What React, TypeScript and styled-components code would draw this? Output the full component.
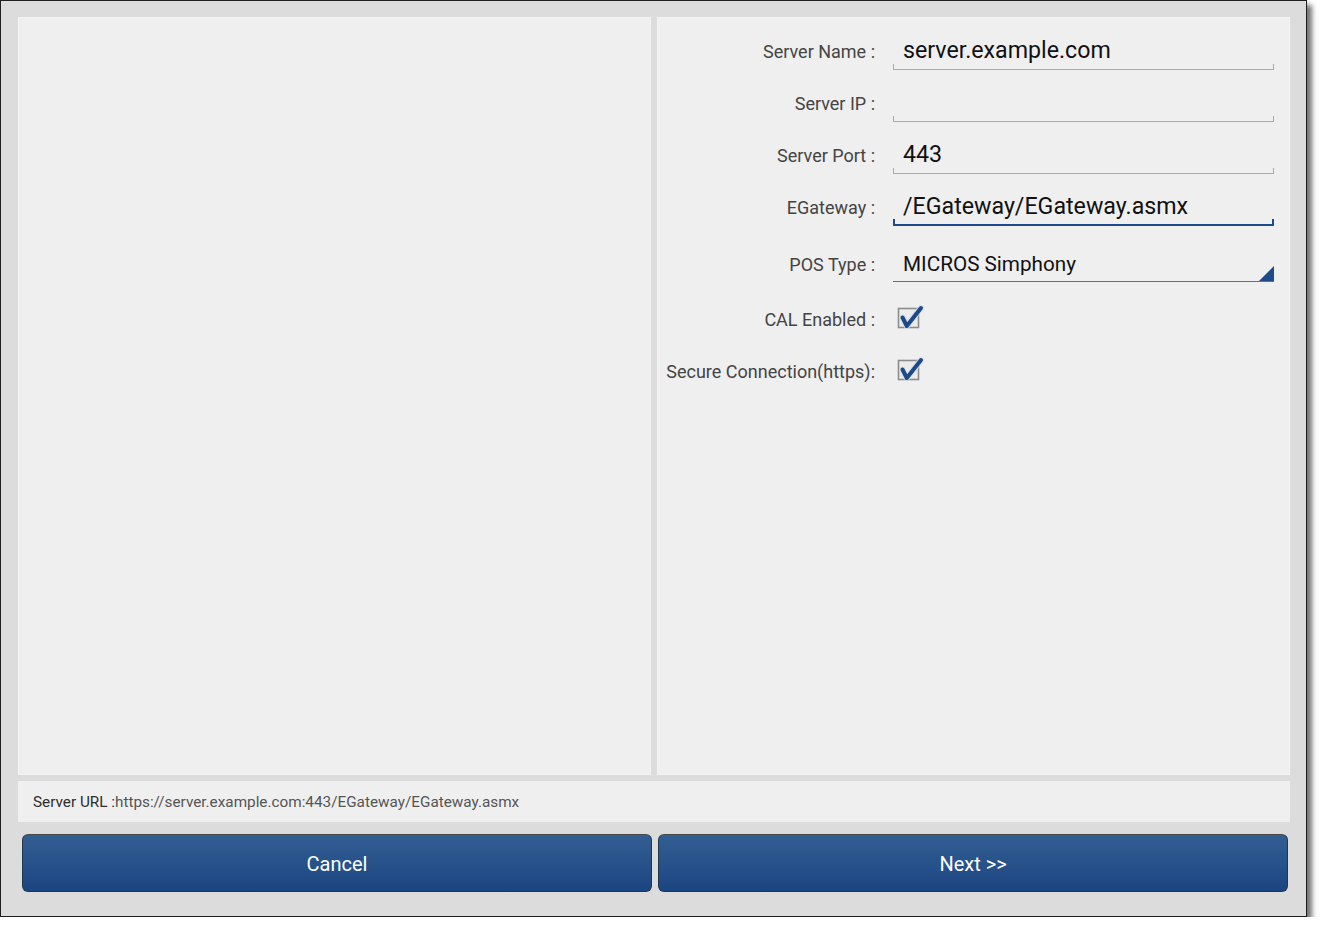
import styled, { createGlobalStyle } from "styled-components"

const Global = createGlobalStyle`
    html, body {
        margin: 0;
        padding: 0;
        background: #ffffff;
        font-family: Roboto, "Liberation Sans", sans-serif;
    }
    * { box-sizing: border-box; }
`

const Frame = styled.div`
    width: 1307px;
    height: 917px;
    background: #dcdcdc;
    border: 1px solid #1e1e1e;
    box-shadow: 5px 5px 5px rgba(0, 0, 0, 0.55);
    padding: 16px 16px 0 17px;
    display: flex;
    flex-direction: column;
`

const Panels = styled.div`
    height: 758px;
    display: grid;
    grid-template-columns: 1fr 1fr;
    column-gap: 6px;
`

const Panel = styled.div`
    background: #efefef;
    border: 1px solid #f3f3f3;
`

const Form = styled.div`
    display: grid;
    grid-template-columns: 208px 1fr;
    column-gap: 18px;
    padding: 0 15px 0 9px;
`

const Label = styled.label<{ $pad?: number }>`
    justify-self: end;
    align-self: end;
    padding-bottom: ${p => p.$pad ?? 8}px;
    font-size: 18px;
    line-height: 20px;
    color: #444444;
    white-space: nowrap;
`

const Field = styled.div<{ $active?: boolean }>`
    position: relative;
    height: 52px;
    display: flex;
    align-items: flex-end;
    &::after {
        content: "";
        position: absolute;
        left: 0;
        right: 0;
        bottom: 0;
        height: 5px;
        border: ${p => (p.$active ? "2px solid #1e4a8a" : "1px solid #a9a9a9")};
        border-top: none;
    }
`

const Input = styled.input`
    width: 100%;
    height: 40px;
    border: none;
    background: transparent;
    padding: 0 0 1px 10px;
    font-family: inherit;
    font-size: 23.2px;
    color: #111;
    outline: none;
`

const Select = styled.div`
    position: relative;
    height: 56px;
    display: flex;
    align-items: flex-end;
    border-bottom: 1px solid #4a74aa;
    padding: 0 0 7px 10px;
    font-size: 20.7px;
    line-height: 20px;
    color: #111;
    &::after {
        content: "";
        position: absolute;
        right: 0;
        bottom: 0;
        border-style: solid;
        border-width: 0 0 15px 15px;
        border-color: transparent transparent #1e4a8a transparent;
    }
`

const CheckRow = styled.div`
    height: 52px;
    display: flex;
    align-items: center;
    padding-left: 4px;
`

const CheckLabel = styled(Label)`
    align-self: center;
    padding-bottom: 0;
    padding-top: 1px;
`

const Spacer = styled.div`
    grid-column: 1 / span 2;
    height: 11px;
`

const UrlBar = styled.div`
    margin-top: 6px;
    height: 41px;
    background: #efefef;
    display: flex;
    align-items: center;
    padding-left: 15px;
    font-size: 15.3px;
    color: #555;
    span {
        color: #2e2e2e;
    }
`

const Buttons = styled.div`
    margin-top: 12px;
    display: grid;
    grid-template-columns: 1fr 1fr;
    column-gap: 6px;
    padding: 0 2px 0 4px;
`

const Button = styled.button`
    height: 58px;
    border-radius: 6px;
    border: 1px solid #23364f;
    border-top-color: #4a4a4a;
    background: linear-gradient(to bottom, #325e92 0%, #27528a 50%, #1a4580 100%);
    color: #ffffff;
    font-family: inherit;
    font-size: 20px;
    padding-top: 3px;
    cursor: pointer;
`

function Check() {
    return (
        <svg width="28" height="28" viewBox="0 0 28 28">
            <rect x="1.5" y="3.5" width="20" height="19" fill="#ececec" stroke="#8c8c8c" strokeWidth="1.6" />
            <path d="M5.5 12.5 L9.8 21 L24 3" fill="none" stroke="#d6dde8" strokeWidth="6.5" strokeLinecap="round" strokeLinejoin="round" opacity="0.7" />
            <path d="M5.5 12.5 L9.8 21 L24 3" fill="none" stroke="#1c4a88" strokeWidth="4" strokeLinecap="round" strokeLinejoin="round" />
        </svg>
    )
}

export default function App() {
    return <>
        <Global />
        <Frame>
            <Panels>
                <Panel />
                <Panel>
                    <Form>
                        <Label>Server Name :</Label>
                        <Field><Input defaultValue="server.example.com" /></Field>
                        <Label>Server IP :</Label>
                        <Field><Input defaultValue="" /></Field>
                        <Label>Server Port :</Label>
                        <Field><Input defaultValue="443" /></Field>
                        <Label>EGateway :</Label>
                        <Field $active><Input defaultValue="/EGateway/EGateway.asmx" /></Field>
                        <Label $pad={7}>POS Type :</Label>
                        <Select>MICROS Simphony</Select>
                        <Spacer />
                        <CheckLabel>CAL Enabled :</CheckLabel>
                        <CheckRow><Check /></CheckRow>
                        <CheckLabel>Secure Connection(https):</CheckLabel>
                        <CheckRow><Check /></CheckRow>
                    </Form>
                </Panel>
            </Panels>
            <UrlBar>
                <span>Server URL :</span>https://server.example.com:443/EGateway/EGateway.asmx
            </UrlBar>
            <Buttons>
                <Button>Cancel</Button>
                <Button>Next &gt;&gt;</Button>
            </Buttons>
        </Frame>
    </>
}
